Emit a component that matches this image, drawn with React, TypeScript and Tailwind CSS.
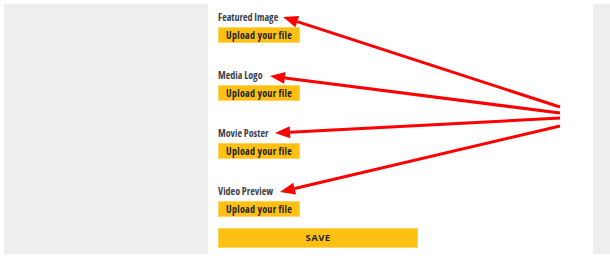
import React from "react";

const fields = ["Featured Image", "Media Logo", "Movie Poster", "Video Preview"];

// arrow from a common start on the right to each label
const arrows = [
  { x1: 560, y1: 107, x2: 283, y2: 17 },
  { x1: 560, y1: 113, x2: 270, y2: 76 },
  { x1: 560, y1: 118, x2: 275, y2: 133 },
  { x1: 560, y1: 126, x2: 280, y2: 192 },
];

const Arrow: React.FC<{ x1: number; y1: number; x2: number; y2: number }> = ({ x1, y1, x2, y2 }) => {
  const ang = Math.atan2(y1 - y2, x1 - x2);
  const len = 15;
  const half = 6;
  const bx = x2 + Math.cos(ang) * len;
  const by = y2 + Math.sin(ang) * len;
  const px = -Math.sin(ang) * half;
  const py = Math.cos(ang) * half;
  return (
    <g>
      <line x1={x1} y1={y1} x2={bx} y2={by} stroke="#ff0000" strokeWidth={3} />
      <polygon points={`${x2},${y2} ${bx + px},${by + py} ${bx - px},${by - py}`} fill="#ff0000" />
    </g>
  );
};

export default function App() {
  return (
    <div className="relative w-[610px] h-[258px] bg-white overflow-hidden" style={{ fontFamily: '"Open Sans", "Noto Sans", sans-serif' }}>
      <div className="flex h-full pt-1 pb-1 pl-1">
        <div className="w-[204px] bg-[#eeeeee]" />
        <div className="flex-1 pl-[10px] pt-[6px]">
          <div className="flex flex-col gap-[25px]">
            {fields.map((f) => (
              <div key={f} className="flex flex-col">
                <div className="h-[14px] leading-[14px] text-[10px] font-bold text-[#3c434a] whitespace-nowrap font-stretch-[85%]">{f}</div>
                <button className="mt-[3px] h-[16px] w-[82px] pl-[7px] text-left bg-[#ffc014] border border-[#ffd55c] text-[10px] font-bold leading-none text-[#222] whitespace-nowrap tracking-[0.3px] font-stretch-[82%]">
                  Upload your file
                </button>
              </div>
            ))}
          </div>
          <button className="mt-[11px] h-[20px] w-[200px] bg-[#ffc014] border border-[#ffd55c] text-[9.5px] font-bold leading-none text-[#222] tracking-[0.4px] font-stretch-[90%]">
            SAVE
          </button>
        </div>
        <div className="w-[17px] bg-[#eeeeee]" />
      </div>
      <svg className="absolute inset-0 pointer-events-none" width={610} height={258}>
        {arrows.map((a, i) => (
          <Arrow key={i} {...a} />
        ))}
      </svg>
    </div>
  );
}
